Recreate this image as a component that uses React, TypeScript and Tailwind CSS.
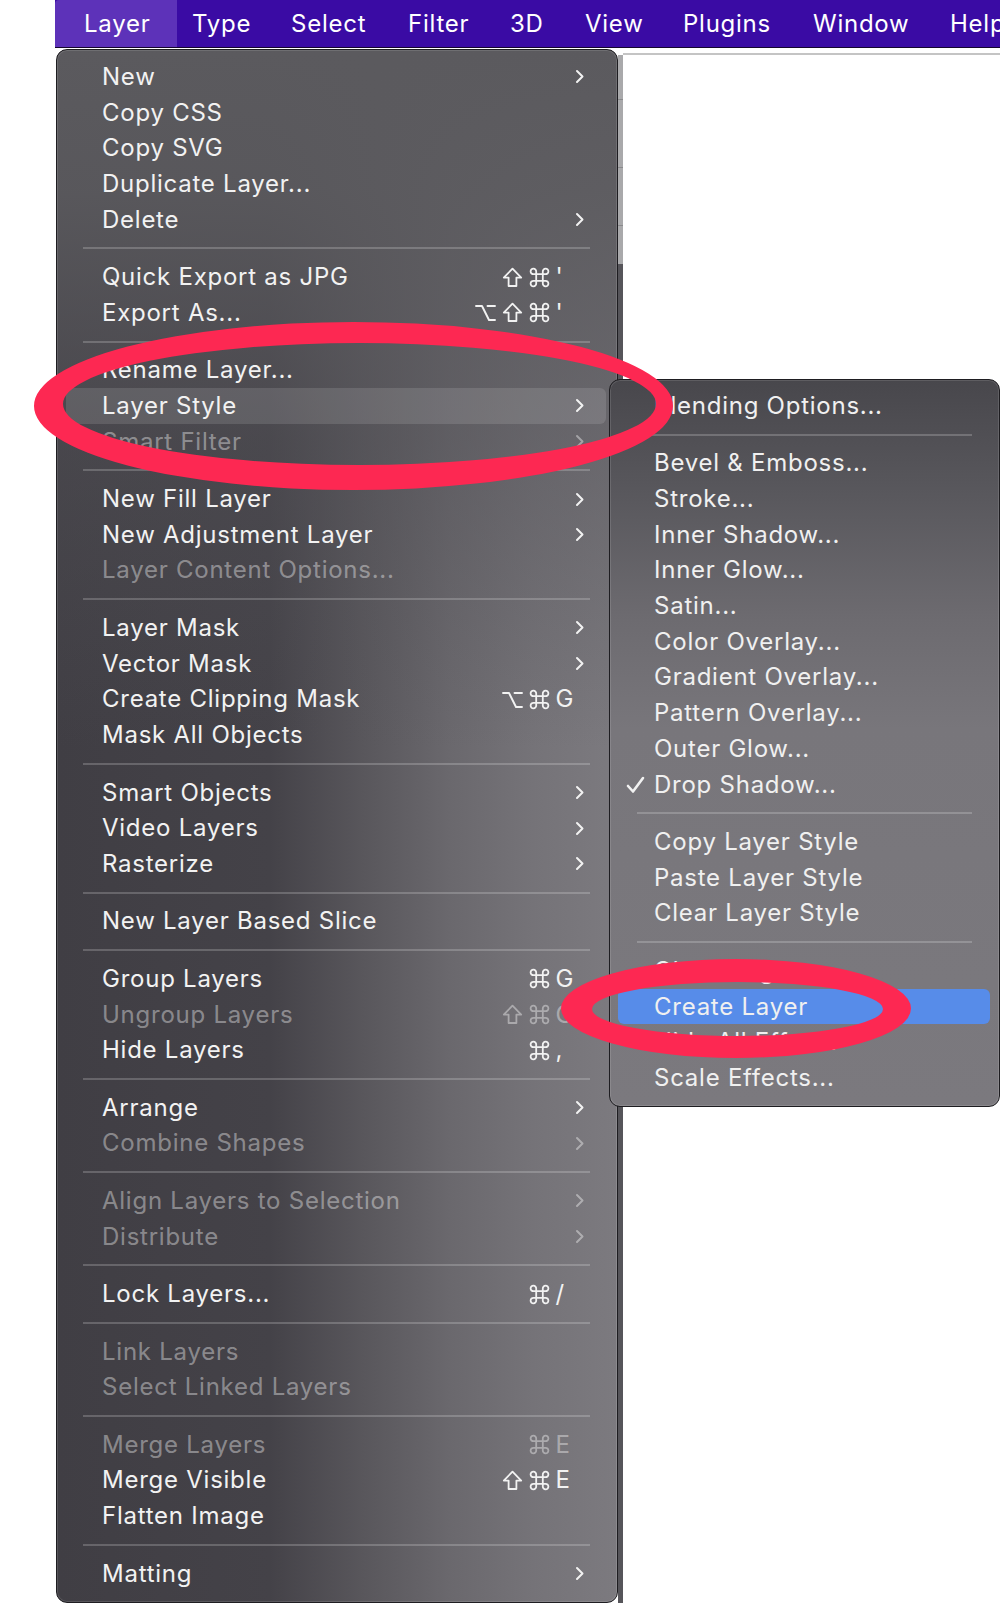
import React from 'react';

type Row =
  | { t: 'sep' }
  | { t: 'item'; label: string; sub?: boolean; dis?: boolean; mods?: string[]; k?: string; hl?: boolean; check?: boolean; blue?: boolean };

const SEP: Row = { t: 'sep' };
const it = (label: string, o: Partial<Extract<Row, { t: 'item' }>> = {}): Row => ({ t: 'item', label, ...o });

const MAIN: Row[] = [
  it('New', { sub: true }),
  it('Copy CSS'),
  it('Copy SVG'),
  it('Duplicate Layer...'),
  it('Delete', { sub: true }),
  SEP,
  it('Quick Export as JPG', { mods: ['shift', 'cmd'], k: "'" }),
  it('Export As...', { mods: ['opt', 'shift', 'cmd'], k: "'" }),
  SEP,
  it('Rename Layer...'),
  it('Layer Style', { sub: true, hl: true }),
  it('Smart Filter', { sub: true, dis: true }),
  SEP,
  it('New Fill Layer', { sub: true }),
  it('New Adjustment Layer', { sub: true }),
  it('Layer Content Options...', { dis: true }),
  SEP,
  it('Layer Mask', { sub: true }),
  it('Vector Mask', { sub: true }),
  it('Create Clipping Mask', { mods: ['opt', 'cmd'], k: 'G' }),
  it('Mask All Objects'),
  SEP,
  it('Smart Objects', { sub: true }),
  it('Video Layers', { sub: true }),
  it('Rasterize', { sub: true }),
  SEP,
  it('New Layer Based Slice'),
  SEP,
  it('Group Layers', { mods: ['cmd'], k: 'G' }),
  it('Ungroup Layers', { mods: ['shift', 'cmd'], k: 'G', dis: true }),
  it('Hide Layers', { mods: ['cmd'], k: ',' }),
  SEP,
  it('Arrange', { sub: true }),
  it('Combine Shapes', { sub: true, dis: true }),
  SEP,
  it('Align Layers to Selection', { sub: true, dis: true }),
  it('Distribute', { sub: true, dis: true }),
  SEP,
  it('Lock Layers...', { mods: ['cmd'], k: '/' }),
  SEP,
  it('Link Layers', { dis: true }),
  it('Select Linked Layers', { dis: true }),
  SEP,
  it('Merge Layers', { mods: ['cmd'], k: 'E', dis: true }),
  it('Merge Visible', { mods: ['shift', 'cmd'], k: 'E' }),
  it('Flatten Image'),
  SEP,
  it('Matting', { sub: true }),
];

const SUB: Row[] = [
  it('Blending Options...'),
  SEP,
  it('Bevel & Emboss...'),
  it('Stroke...'),
  it('Inner Shadow...'),
  it('Inner Glow...'),
  it('Satin...'),
  it('Color Overlay...'),
  it('Gradient Overlay...'),
  it('Pattern Overlay...'),
  it('Outer Glow...'),
  it('Drop Shadow...', { check: true }),
  SEP,
  it('Copy Layer Style'),
  it('Paste Layer Style'),
  it('Clear Layer Style'),
  SEP,
  it('Global Light...'),
  it('Create Layer', { blue: true }),
  it('Hide All Effects'),
  it('Scale Effects...'),
];

function Chevron() {
  return (
    <svg width="9" height="15" viewBox="0 0 9 15" className="shrink-0">
      <path d="M2 2 L7.5 7.5 L2 13" fill="none" stroke="currentColor" strokeWidth="2" strokeLinecap="round" strokeLinejoin="round" />
    </svg>
  );
}

function Check() {
  return (
    <svg width="19" height="18" viewBox="0 0 19 18">
      <path d="M2 10 L7 15.5 L17 2" fill="none" stroke="#f2f2f2" strokeWidth="2.6" strokeLinecap="round" strokeLinejoin="round" />
    </svg>
  );
}

function ModIcon({ kind }: { kind: string }) {
  if (kind === 'cmd') {
    return (
      <svg width="21" height="21" viewBox="0 0 21 21" className="shrink-0">
        <path
          d="M7.2 7.2 V4.6 a2.8 2.8 0 1 0 -2.6 2.6 H16.4 a2.8 2.8 0 1 0 -2.6 -2.6 V16.4 a2.8 2.8 0 1 0 2.6 -2.6 H4.6 a2.8 2.8 0 1 0 2.6 2.6 Z"
          fill="none"
          stroke="currentColor"
          strokeWidth="1.8"
          strokeLinejoin="round"
        />
      </svg>
    );
  }
  if (kind === 'shift') {
    return (
      <svg width="21" height="21" viewBox="0 0 21 21" className="shrink-0">
        <path d="M10.5 1.6 L19.2 10.6 H14.4 V19 H6.6 V10.6 H1.8 Z" fill="none" stroke="currentColor" strokeWidth="1.8" strokeLinejoin="round" />
      </svg>
    );
  }
  return (
    <svg width="21" height="21" viewBox="0 0 21 21" className="shrink-0">
      <path d="M1 4 H7 L14 18 H20 M12.5 4 H20" fill="none" stroke="currentColor" strokeWidth="1.9" strokeLinecap="round" strokeLinejoin="round" />
    </svg>
  );
}

function MainMenu() {
  return (
    <div className="mt-[1px] w-[562px] shrink-0 rounded-[11px] border border-[#1e1d21] pt-[9px] pb-[8px] shadow-[inset_0_0_0_1px_rgba(255,255,255,0.12)] bg-[linear-gradient(180deg,rgba(91,90,94,1)_0%,rgba(91,90,94,0.9)_9%,rgba(82,81,86,0.45)_25%,rgba(82,81,86,0)_45%),linear-gradient(90deg,#403e44_0%,#444248_38%,#59575c_55%,#6a686d_70%,#757378_85%,#7c7a7f_100%)]">
      {MAIN.map((r, i) =>
        r.t === 'sep' ? (
          <div key={i} className="h-[21.8px] flex items-center pl-[26px] pr-[27px]">
            <div className="h-[2px] w-full bg-[rgba(255,255,255,0.2)]" />
          </div>
        ) : (
          <div
            key={i}
            className={`h-[35.7px] ml-[9px] mr-[11px] pl-[36px] pr-[22.5px] flex items-center rounded-[6px] ${
              r.hl ? 'bg-[rgba(255,255,255,0.12)]' : ''
            } ${r.dis ? 'text-[rgba(255,255,255,0.4)]' : 'text-[#f2f2f2]'}`}
          >
            <span className="flex-1 whitespace-nowrap">{r.label}</span>
            {r.mods ? (
              <span className="flex items-center">
                <span className="flex items-center gap-[6px]">
                  {r.mods.map((m, j) => (
                    <ModIcon key={j} kind={m} />
                  ))}
                </span>
                <span className="w-[34px] pl-[6px] tracking-normal">{r.k}</span>
              </span>
            ) : null}
            {r.sub ? <Chevron /> : null}
          </div>
        )
      )}
    </div>
  );
}

function SubMenu() {
  return (
    <div className="absolute left-[609px] top-[379px] w-[391px] rounded-[11px] border border-[#1e1d21] pt-[8px] pb-[10px] shadow-[inset_0_0_0_1px_rgba(255,255,255,0.12)] bg-[linear-gradient(180deg,#48474c_0%,#58575c_15%,#6d6b70_33%,#78767b_48%,#7b797e_100%)]">
      {SUB.map((r, i) =>
        r.t === 'sep' ? (
          <div key={i} className="h-[21.8px] flex items-center pl-[27px] pr-[27px]">
            <div className="h-[2px] w-full bg-[rgba(255,255,255,0.2)]" />
          </div>
        ) : (
          <div
            key={i}
            className={`h-[35.7px] ml-[8px] mr-[9px] pl-[8px] flex items-center rounded-[6px] text-[#f0f0f0] ${
              r.blue ? 'bg-[#578ce9]' : ''
            }`}
          >
            <span className="w-[28px] flex items-center">{r.check ? <Check /> : null}</span>
            <span className="whitespace-nowrap">{r.label}</span>
          </div>
        )
      )}
    </div>
  );
}

export default function App() {
  return (
    <div className="relative w-[1000px] h-[1611px] overflow-hidden bg-white text-[24px] tracking-[0.75px] font-[family-name:Inter,'Noto_Sans',sans-serif]">
      <div className="ml-[55px] flex h-[48px] items-stretch border-b border-[#14052e] bg-[#3a0ba4] text-white text-[24px] whitespace-nowrap">
        <div className="w-[122px] shrink-0 flex items-center pl-[29px] bg-[#5d32b9] rounded-tl-[4px]">Layer</div>
        <div className="ml-[15px] w-[99px] shrink-0 flex items-center">Type</div>
        <div className="w-[117px] shrink-0 flex items-center">Select</div>
        <div className="w-[102px] shrink-0 flex items-center">Filter</div>
        <div className="w-[75px] shrink-0 flex items-center">3D</div>
        <div className="w-[98px] shrink-0 flex items-center">View</div>
        <div className="w-[130px] shrink-0 flex items-center">Plugins</div>
        <div className="w-[137px] shrink-0 flex items-center">Window</div>
        <div className="w-[60px] shrink-0 flex items-center">Help</div>
      </div>
      <div className="flex">
        <div className="w-[56px] shrink-0" />
        <MainMenu />
        <div className="flex-1 flex flex-col">
          <div className="flex h-[1555px]">
            <div className="w-[5px] flex flex-col">
              <div className="h-[7px]" />
              <div className="h-[45px] bg-[#a9a9ab] border-b border-[#8a8a8c]" />
              <div className="h-[68px] bg-[#a9a9ab] border-b border-[#8a8a8c]" />
              <div className="h-[58px] bg-[#a9a9ab] border-b border-[#8a8a8c]" />
              <div className="h-[38px] bg-[#a9a9ab]" />
              <div className="flex-1 bg-[#56555a]" />
            </div>
            <div className="flex-1 flex flex-col">
              <div className="mt-[5px] h-[2px] bg-[#c4c4c4]" />
            </div>
          </div>
        </div>
      </div>
      <SubMenu />
      <svg className="absolute left-0 top-0 pointer-events-none" width="1000" height="1611" viewBox="0 0 1000 1611">
        <path
          fillRule="evenodd"
          fill="#fd2852"
          d="M34,406 a319.5,84 0 1,0 639,0 a319.5,84 0 1,0 -639,0 Z M63,404 a296.5,61 0 1,0 593,0 a296.5,61 0 1,0 -593,0 Z"
        />
        <path
          fillRule="evenodd"
          fill="#fd2852"
          d="M561,1008.5 a175,49.5 0 1,0 350,0 a175,49.5 0 1,0 -350,0 Z M592,1009 a145.5,27 0 1,0 291,0 a145.5,27 0 1,0 -291,0 Z"
        />
      </svg>
    </div>
  );
}
